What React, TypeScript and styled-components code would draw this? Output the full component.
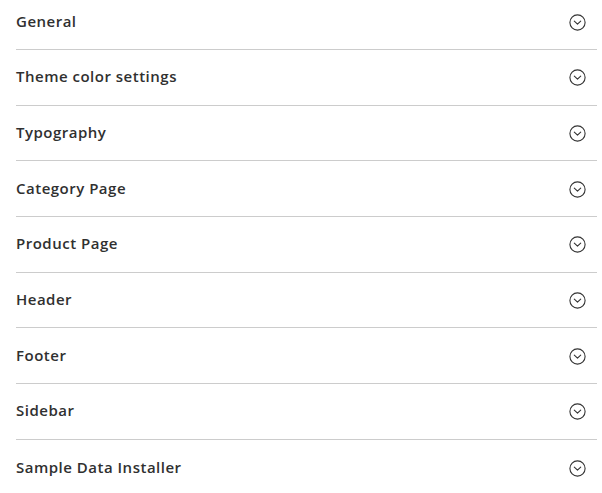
import React from "react";
import styled, { createGlobalStyle } from "styled-components";

const Global = createGlobalStyle`
  html, body { margin: 0; padding: 0; background: #ffffff; }
  body { font-family: "Open Sans", "Liberation Sans", sans-serif; overflow: hidden; }
`;

const List = styled.div`
  display: flex;
  flex-direction: column;
  margin-top: -5.7px;
  padding: 0 5px 0 16px;
`;

const Row = styled.div<{ $last?: boolean }>`
  box-sizing: border-box;
  height: 55.7px;
  display: flex;
  align-items: center;
  justify-content: space-between;
  padding-right: 11px;
  border-bottom: ${(p) => (p.$last ? "none" : "1px solid #cccccc")};
  cursor: pointer;
`;

const Title = styled.span`
  font-size: 15px;
  font-weight: 600;
  color: #303030;
  letter-spacing: 0.5px;
  margin-top: -2px;
`;

const Toggle = styled.svg`
  width: 17px;
  height: 17px;
  display: block;
  margin-top: 1px;
`;

const ChevronCircle = () => (
  <Toggle viewBox="0 0 17 17" fill="none">
    <circle cx="8.5" cy="8.5" r="7.6" stroke="#333" strokeWidth="1.1" />
    <path d="M5.3 7.2 L8.5 10.2 L11.7 7.2" stroke="#333" strokeWidth="1.1" strokeLinecap="round" strokeLinejoin="round" />
  </Toggle>
);

const sections = [
  "General",
  "Theme color settings",
  "Typography",
  "Category Page",
  "Product Page",
  "Header",
  "Footer",
  "Sidebar",
  "Sample Data Installer",
];

export default function App() {
  return (
    <>
      <Global />
      <List>
        {sections.map((s, i) => (
          <Row key={s} $last={i === sections.length - 1}>
            <Title>{s}</Title>
            <ChevronCircle />
          </Row>
        ))}
      </List>
    </>
  );
}
